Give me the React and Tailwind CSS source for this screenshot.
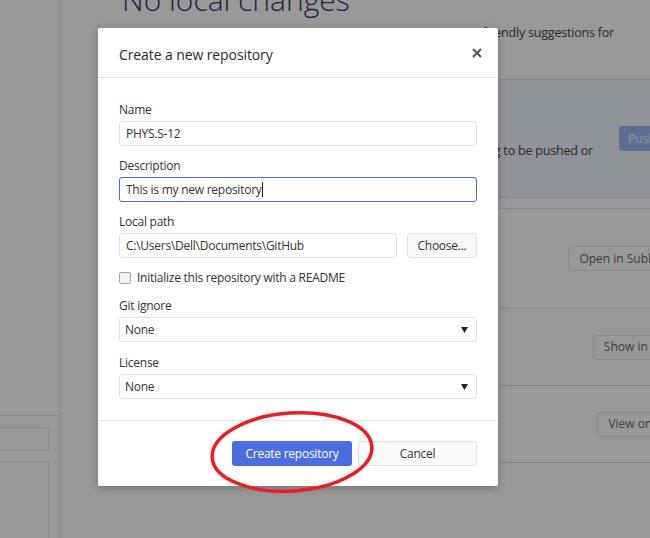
const font = { fontFamily: '"Open Sans", "Noto Sans", sans-serif' };

const Field = ({ label, children, className = "" }) => (
  <div className={className}>
    <div className="h-[16px] mb-[3px] text-[12px] leading-[16px] text-[#333]">{label}</div>
    {children}
  </div>
);

const TextInput = ({ value, focused }) => (
  <div
    className={`h-[25px] flex items-center px-[6px] rounded-[3px] bg-white text-[12px] text-[#333] border ${
      focused ? "border-[#4a6ee0]" : "border-[#dfe2e5]"
    }`}
  >
    {value}
    {focused && <span className="w-px h-[15px] bg-[#222]" />}
  </div>
);

const Select = ({ value }) => (
  <div className="h-[25px] flex items-center justify-between pl-[5px] pr-[8px] rounded-[3px] bg-white text-[12px] text-[#333] border border-[#dfe2e5]">
    <span>{value}</span>
    <svg width="7" height="6" viewBox="0 0 7 6">
      <path d="M0 0 H7 L3.5 6 Z" fill="#222" />
    </svg>
  </div>
);

const SectionRow = ({ button, shift, tall }) => (
  <div className={`${tall ? "h-[100px]" : "h-[77px]"} border-b border-[#e4e6e9] flex items-center justify-end`}>
    <div
      className="h-[25px] px-[10px] flex items-center border border-[#e1e4e8] rounded-[3px] bg-white text-[12px] text-[#666] whitespace-nowrap"
      style={{ marginRight: shift }}
    >
      {button}
    </div>
  </div>
);

const App = () => {
  return (
    <div className="relative w-[650px] h-[538px] overflow-hidden bg-white" style={font}>
      {/* app behind the dialog */}
      <div className="flex h-full">
        <div className="w-[61px] shrink-0 border-r border-[#e1e4e8] flex flex-col">
          <div className="h-[416px] shrink-0 border-b border-[#e4e6e9]" />
          <div className="mt-[11px] h-[24px] mr-[11px] shrink-0 border border-l-0 border-[#e1e4e8] rounded-r-[3px]" />
          <div className="mt-[10px] h-[100px] mr-[11px] shrink-0 border border-l-0 border-[#e1e4e8] rounded-r-[3px]" />
        </div>
        <div className="flex-1 pl-[61px] flex flex-col">
          <h1 className="-mt-[19px] h-[38px] text-[30px] leading-[38px] font-light text-[#2c3a66] whitespace-nowrap">
            No local changes
          </h1>
          <div className="mt-[5px] w-[492px] flex justify-end overflow-hidden whitespace-nowrap text-[12.5px] leading-[18px] tracking-[-0.2px] text-[#444]">
            Here are some friendly suggestions for
          </div>
          <div className="mt-[37px] h-[119px] bg-[#f0f5fc] border-t border-b border-[#dde4ee] flex items-center">
            <div className="w-[471px] flex justify-end pt-[26px] text-[12.5px] tracking-[-0.2px] text-[#444] whitespace-nowrap">
              waiting to be pushed or
            </div>
            <div className="ml-[26px] h-[25px] w-[60px] rounded-[3px] bg-[#9db9fa] text-[12px] text-[#f4f6fb] flex items-center pl-[9px]">
              Push
            </div>
          </div>
          <div className="mt-[10px] border-t border-[#e4e6e9]">
            <SectionRow button="Open in Sublime Text" shift={-31} tall />
            <SectionRow button="Show in Explorer" shift={-30} />
            <SectionRow button="View on GitHub" shift={-27} />
          </div>
        </div>
      </div>

      {/* dim overlay */}
      <div className="absolute inset-0 bg-black/40" />

      {/* dialog */}
      <div className="absolute left-[98px] top-[28px] w-[400px] bg-white rounded-[2px] shadow-[0_2px_8px_rgba(0,0,0,0.25)] tracking-[-0.25px]">
        <div className="h-[50px] pt-[3px] px-[21px] flex items-center justify-between border-b border-[#e1e4e8]">
          <span className="text-[14px] text-[#2b2b2b] tracking-[-0.1px]">Create a new repository</span>
          <svg width="10" height="10" viewBox="0 0 10 10" className="-mr-[5px] -mt-[2px]">
            <path d="M1 1 L9 9 M9 1 L1 9" stroke="#555" strokeWidth="2" />
          </svg>
        </div>
        <div className="px-[21px] pt-[24px] pb-[21px]">
          <Field label="Name">
            <TextInput value="PHYS.S-12" />
          </Field>
          <Field label="Description" className="mt-[12px]">
            <TextInput value="This is my new repository" focused />
          </Field>
          <Field label="Local path" className="mt-[12px]">
            <div className="flex gap-[10px]">
              <div className="flex-1">
                <TextInput value="C:\Users\Dell\Documents\GitHub" />
              </div>
              <div className="w-[70px] h-[25px] rounded-[3px] border border-[#dfe2e5] bg-[#f7f8fa] text-[12px] text-[#333] flex items-center justify-center">
                Choose...
              </div>
            </div>
          </Field>
          <div className="mt-[12px] h-[16px] flex items-center gap-[6px] text-[12px] text-[#333]">
            <span className="w-[12px] h-[12px] rounded-[2px] border border-[#a8a8a8] bg-[#f2f2f2]" />
            Initialize this repository with a README
          </div>
          <Field label="Git ignore" className="mt-[12px]">
            <Select value="None" />
          </Field>
          <Field label="License" className="mt-[13px]">
            <Select value="None" />
          </Field>
        </div>
        <div className="h-[66px] border-t border-[#e1e4e8] px-[21px] flex items-center justify-end gap-[6px]">
          <div className="w-[120px] h-[25px] rounded-[3px] bg-[#4a6ee0] text-white text-[12px] flex items-center justify-center">
            Create repository
          </div>
          <div className="w-[119px] h-[25px] rounded-[3px] border border-[#dfe2e5] bg-[#f9fafb] text-[12px] text-[#333] flex items-center justify-center">
            Cancel
          </div>
        </div>
      </div>

      {/* red annotation ellipse */}
      <svg className="absolute left-0 top-0 pointer-events-none" width="650" height="538">
        <ellipse
          cx="292"
          cy="452"
          rx="80"
          ry="39"
          fill="none"
          stroke="#ed1c24"
          strokeWidth="3.5"
          transform="rotate(-4 292 452)"
        />
      </svg>
    </div>
  );
};

export default App;
